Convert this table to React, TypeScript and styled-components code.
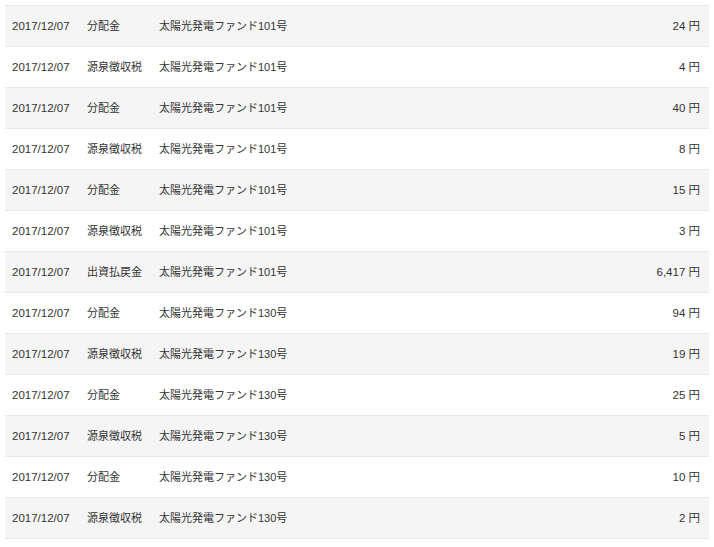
import React from "react";
import styled, { createGlobalStyle } from "styled-components";

const Global = createGlobalStyle`
  html, body { margin: 0; padding: 0; background: #fff; }
  body { font-family: "Liberation Sans", Arial, "Noto Sans CJK JP", sans-serif; }
`;

const Wrap = styled.div`
  padding: 5px 5px 0 5px;
`;

const Table = styled.div`
  width: 704px;
  border-top: 1px solid #e9e9e9;
`;

const Row = styled.div<{ $odd: boolean }>`
  display: grid;
  grid-template-columns: 75px 72px 1fr auto;
  align-items: center;
  height: 40px;
  border-bottom: 1px solid #e9e9e9;
  background: ${(p) => (p.$odd ? "#f5f5f5" : "#ffffff")};
  color: #333;
`;

const Cell = styled.div<{ $right?: boolean; $cjk?: boolean }>`
  padding-left: ${(p) => (p.$right ? "0" : "7px")};
  padding-right: ${(p) => (p.$right ? "9px" : "0")};
  text-align: ${(p) => (p.$right ? "right" : "left")};
  white-space: nowrap;
  font-size: ${(p) => (p.$cjk ? "11px" : "11.5px")};
  line-height: 16px;
  font-family: "Liberation Sans", Arial, "Noto Sans CJK JP", sans-serif;
`;

const rows: [string, string, string, string][] = [
  ["2017/12/07", "分配金", "太陽光発電ファンド101号", "24"],
  ["2017/12/07", "源泉徴収税", "太陽光発電ファンド101号", "4"],
  ["2017/12/07", "分配金", "太陽光発電ファンド101号", "40"],
  ["2017/12/07", "源泉徴収税", "太陽光発電ファンド101号", "8"],
  ["2017/12/07", "分配金", "太陽光発電ファンド101号", "15"],
  ["2017/12/07", "源泉徴収税", "太陽光発電ファンド101号", "3"],
  ["2017/12/07", "出資払戻金", "太陽光発電ファンド101号", "6,417"],
  ["2017/12/07", "分配金", "太陽光発電ファンド130号", "94"],
  ["2017/12/07", "源泉徴収税", "太陽光発電ファンド130号", "19"],
  ["2017/12/07", "分配金", "太陽光発電ファンド130号", "25"],
  ["2017/12/07", "源泉徴収税", "太陽光発電ファンド130号", "5"],
  ["2017/12/07", "分配金", "太陽光発電ファンド130号", "10"],
  ["2017/12/07", "源泉徴収税", "太陽光発電ファンド130号", "2"],
];

export default function App() {
  return (
    <>
      <Global />
      <Wrap>
        <Table>
          {rows.map((r, i) => (
            <Row key={i} $odd={i % 2 === 0}>
              <Cell>{r[0]}</Cell>
              <Cell $cjk>{r[1]}</Cell>
              <Cell $cjk>{r[2]}</Cell>
              <Cell $right>{r[3]} 円</Cell>
            </Row>
          ))}
        </Table>
      </Wrap>
    </>
  );
}
